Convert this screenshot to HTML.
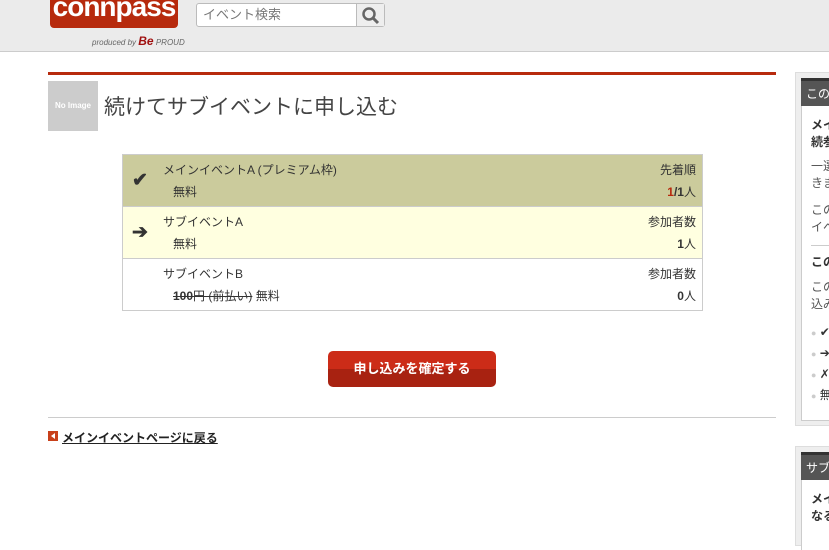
<!DOCTYPE html>
<html><head><meta charset="utf-8"><style>
*{margin:0;padding:0;box-sizing:border-box}
body{width:829px;height:539px;overflow:hidden;background:#fff;font-family:"Liberation Sans","Noto Sans CJK JP",sans-serif;color:#333;position:relative}
.hd{position:absolute;left:0;top:0;width:829px;height:52px;background:#ebebeb;border-bottom:1px solid #ccc}
.logo{position:absolute;left:50px;top:-6px;width:128px;height:34px;background:#b72a0d;border-radius:0 0 4px 4px;color:#fff;font:bold 28px "Liberation Sans",sans-serif;text-align:center;line-height:26px;letter-spacing:-1px}
.prod{position:absolute;left:92px;top:34px;font:italic 8px "Liberation Sans",sans-serif;color:#666}
.prod b{color:#a01010;font-size:12px}
.srch{position:absolute;left:196px;top:3px;width:189px;height:24px;border:1px solid #bbb;border-radius:3px;background:#fff;font-size:13px;color:#777;line-height:22px;padding-left:6px}
.sb{position:absolute;right:0;top:0;width:28px;height:22px;border-left:1px solid #bbb;background:#eee}
.abs{position:absolute}
.row{position:absolute;left:123px;width:579px;height:52px;border-bottom:1px solid #ccc;font-size:12px}
.row .n{position:absolute;left:40px;top:6px}
.row .p{position:absolute;left:50px;top:28px}
.row .r1{position:absolute;right:6px;top:6px}
.row .r2{position:absolute;right:6px;top:28px;font-weight:bold}
.row .ic{position:absolute;left:9px;top:14px;font-size:19px;font-weight:bold;color:#333}
.bl{color:#ccc;font-size:9px}
</style></head><body>
<div class="hd">
<div class="logo">connpass</div>
<div class="prod">produced by <b>Be</b> PROUD</div>
<div class="srch">イベント検索<div class="sb"><svg width="28" height="22"><circle cx="12" cy="10" r="5.5" fill="none" stroke="#666" stroke-width="2.5"/><line x1="16" y1="14" x2="21" y2="19" stroke="#666" stroke-width="3"/></svg></div></div>
</div>
<div class="abs" style="left:48px;top:72px;width:728px;height:3px;background:#b72a0d"></div>
<div class="abs" style="left:48px;top:81px;width:50px;height:50px;background:#ccc;color:#fff;font-size:8px;font-weight:bold;text-align:center;line-height:50px">No Image</div>
<div class="abs" style="left:104px;top:91px;font-size:21px;color:#444">続けてサブイベントに申し込む</div>
<div class="abs" style="left:122px;top:154px;width:581px;height:157px;border:1px solid #ccc"></div>
<div class="row" style="top:155px;background:#cbcb9c"><span class="ic">✔</span><span class="n">メインイベントA (プレミアム枠)</span><span class="p">無料</span><span class="r1">先着順</span><span class="r2"><span style="color:#b72a0d">1</span>/1<span style="font-weight:normal">人</span></span></div>
<div class="row" style="top:207px;background:#ffffe0"><span class="ic">➔</span><span class="n">サブイベントA</span><span class="p">無料</span><span class="r1">参加者数</span><span class="r2">1<span style="font-weight:normal">人</span></span></div>
<div class="row" style="top:259px;border-bottom:none"><span class="n">サブイベントB</span><span class="p"><s><b>100</b>円 (前払い)</s> 無料</span><span class="r1">参加者数</span><span class="r2">0<span style="font-weight:normal">人</span></span></div>
<div class="abs" style="left:328px;top:351px;width:168px;height:36px;border-radius:5px;background:linear-gradient(#cc2c18 50%,#a82211 50%);color:#fff;font-size:13px;font-weight:bold;text-align:center;line-height:36px">申し込みを確定する</div>
<div class="abs" style="left:48px;top:417px;width:728px;height:1px;background:#ccc"></div>
<div class="abs" style="left:48px;top:431px;width:10px;height:10px;background:#c8401a"><div style="position:absolute;left:3px;top:2px;border-right:4px solid #fff;border-top:3px solid transparent;border-bottom:3px solid transparent"></div></div>
<div class="abs" style="left:62px;top:429px;font-size:12px;font-weight:bold;text-decoration:underline;color:#222">メインイベントページに戻る</div>
<div class="abs" style="left:795px;top:72px;width:40px;height:354px;background:#eee;border:1px solid #ddd"></div>
<div class="abs" style="left:801px;top:78px;width:40px;height:28px;background:#555;color:#fff;font-size:12px;line-height:26px;padding-left:5px;border-top:3px solid #333">この</div>
<div class="abs" style="left:801px;top:106px;width:40px;height:315px;background:#fff;border-left:1px solid #ccc;border-bottom:1px solid #ccc;font-size:12px;line-height:17px;padding-left:9px">
<div style="margin-top:11px;font-weight:bold">メイ<br>続参</div>
<div style="margin-top:7px;color:#555">一選<br>きま</div>
<div style="margin-top:10px;color:#555">この<br>イベ</div>
<div style="margin-top:9px;border-top:1px solid #ccc;width:30px"></div>
<div style="margin-top:8px;font-weight:bold">この</div>
<div style="margin-top:8px;color:#555">この<br>込み</div>
<div style="margin-top:9px;line-height:20px"><span class="bl">●</span> ✔<br><span class="bl">●</span> ➔<br><span class="bl">●</span> ✗<br><span class="bl">●</span> 無</div>
</div>
<div class="abs" style="left:795px;top:446px;width:40px;height:100px;background:#eee;border:1px solid #ddd"></div>
<div class="abs" style="left:801px;top:452px;width:40px;height:28px;background:#555;color:#fff;font-size:12px;line-height:26px;padding-left:5px;border-top:3px solid #333">サブ</div>
<div class="abs" style="left:801px;top:480px;width:40px;height:70px;background:#fff;border-left:1px solid #ccc;font-size:12px;line-height:17px;padding-left:9px;font-weight:bold"><div style="margin-top:11px">メイ<br>なる</div></div>
</body></html>
